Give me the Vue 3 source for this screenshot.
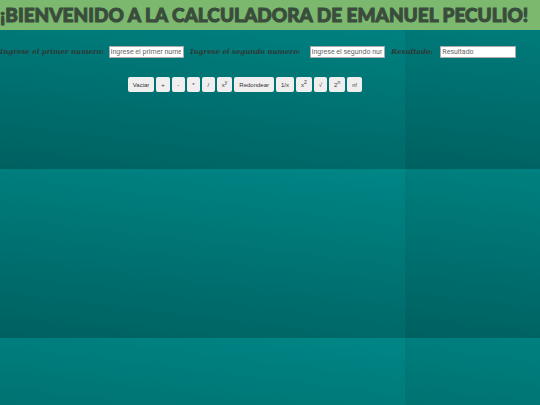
<script setup>
import { ref } from 'vue';

const primero = ref("");
const segundo = ref("");
const resultado = ref("");

// Factorial de un numero entero
function factorial(n) {
    let total = 1;
    for (let i = 2; i <= n; i++) {
        total *= i;
    }
    return total;
}

const botones = [
    { texto: "Vaciar", accion: () => vaciar() },
    { texto: "+", accion: () => calcular((a, b) => a + b) },
    { texto: "-", accion: () => calcular((a, b) => a - b) },
    { texto: "*", accion: () => calcular((a, b) => a * b) },
    { texto: "/", accion: () => calcular((a, b) => a / b) },
    { texto: "x", exponente: "y", accion: () => calcular((a, b) => a ** b) },
    { texto: "Redondear", accion: () => { resultado.value = String(Math.round(Number(resultado.value))); } },
    { texto: "1/x", accion: () => calcular((a) => 1 / a) },
    { texto: "x", exponente: "2", accion: () => calcular((a) => a * a) },
    { texto: "√", accion: () => calcular((a) => Math.sqrt(a)) },
    { texto: "2", exponente: "n", accion: () => calcular((a) => 2 ** a) },
    { texto: "n!", accion: () => calcular(factorial) },
];

function calcular(operacion) {
    resultado.value = String(operacion(Number(primero.value), Number(segundo.value)));
}

function vaciar() {
    primero.value = "";
    segundo.value = "";
    resultado.value = "";
}
</script>

<template>
    <div class="calculadora">
        <h1 class="titulo">¡BIENVENIDO A LA CALCULADORA DE EMANUEL PECULIO!</h1>
        <div class="campos">
            <label for="primero">Ingrese el primer numero:</label>
            <input id="primero" v-model="primero" type="text" placeholder="Ingrese el primer numero">
            <label for="segundo">Ingrese el segundo numero:</label>
            <input id="segundo" v-model="segundo" type="text" placeholder="Ingrese el segundo numero">
            <label for="resultado">Resultado:</label>
            <input id="resultado" v-model="resultado" type="text" placeholder="Resultado">
        </div>
        <div class="botones">
            <button v-for="(boton, i) in botones" :key="i" type="button" @click="boton.accion">
                {{ boton.texto }}<sup v-if="boton.exponente">{{ boton.exponente }}</sup>
            </button>
        </div>
    </div>
</template>

<style>
body{
    margin: 0;
}
</style>

<style scoped>
.calculadora{
    min-height: 100vh;
    background-color: #007373;
    background-image: linear-gradient(187deg, #008686, #006060);
    background-size: 405px 169px;
}
.titulo{
    margin: 0;
    background-color: #7cb96f;
    color: #3a4d3c;
    font-family: Lato, sans-serif;
    font-size: 19px;
    font-weight: 900;
    line-height: 30px;
    white-space: nowrap;
    -webkit-text-stroke: 1px #3a4d3c;
}
.campos{
    display: grid;
    grid-template-columns: 19% 14% 21% 14% 8% 14%;
    column-gap: 6px;
    align-items: center;
    padding-top: 16px;
}
.campos label{
    color: #2f3735;
    font-family: "DejaVu Serif", serif;
    font-size: 7px;
    font-weight: bold;
    font-style: italic;
    line-height: 12px;
    white-space: nowrap;
}
.campos input{
    box-sizing: border-box;
    min-width: 0;
    height: 12px;
    padding: 1px 2px 1px 1px;
    border: 1px solid #aaa;
    border-radius: 0;
    background-color: white;
    font-family: Roboto, sans-serif;
    font-size: 7px;
}
.campos input::placeholder{
    color: #666;
}
.botones{
    display: flex;
    justify-content: center;
    gap: 2px;
    padding: 19px 50px 0 0;
}
.botones button{
    min-width: 13px;
    height: 15px;
    padding: 0 5px;
    border: 0;
    border-radius: 2px;
    background-color: #efefef;
    color: #333;
    font-family: "Liberation Sans", sans-serif;
    font-size: 6px;
    line-height: 14px;
}
.botones sup{
    font-size: 5px;
    line-height: 0;
}
</style>
